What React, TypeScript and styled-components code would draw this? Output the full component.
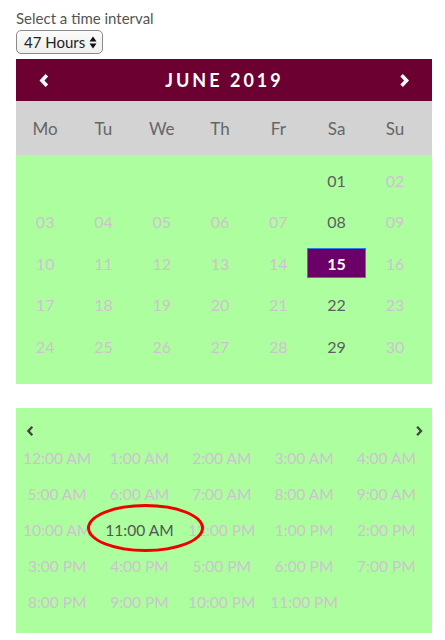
import React from "react";
import styled, { createGlobalStyle } from "styled-components";

const Global = createGlobalStyle`
  html, body { margin: 0; padding: 0; background: #fff; }
  body { font-family: "Source Sans Pro", Lato, "Noto Sans", sans-serif; }
`;

const Page = styled.div`
  padding: 8px 13px 0 16px;
  width: 416px;
`;

const Label = styled.div`
  font-size: 15px;
  color: #555;
  line-height: 20px;
`;

const SelectBox = styled.label`
  display: inline-flex;
  align-items: center;
  gap: 3px;
  margin-top: 2px;
  height: 24px;
  box-sizing: border-box;
  padding: 0 5px 0 7px;
  border: 1px solid #8a8a8a;
  border-radius: 5px;
  background: linear-gradient(#fbfbfb, #efefef);
`;

const NativeSelect = styled.select`
  appearance: none;
  -webkit-appearance: none;
  border: none;
  background: transparent;
  font-family: "Source Sans Pro", Lato, sans-serif;
  font-size: 15px;
  color: #222;
  padding: 0;
  margin: 0;
  outline: none;
`;

const Calendar = styled.div`
  margin-top: 5px;
`;

const Header = styled.div`
  height: 42px;
  background: #6c0031;
  color: #fff;
  display: flex;
  align-items: center;
  justify-content: space-between;
  padding: 0 22px 0 23px;
`;

const Title = styled.div`
  font-size: 18px;
  font-weight: 700;
  letter-spacing: 3px;
`;

const Arrow = styled.span<{ $dark?: boolean }>`
  display: flex;
  align-items: center;
  color: ${(p) => (p.$dark ? "#444" : "#fff")};
`;

const WeekRow = styled.div`
  height: 54px;
  background: #d3d3d3;
  display: grid;
  grid-template-columns: repeat(7, 58.3px);
  align-items: center;
`;

const WeekDay = styled.div`
  text-align: center;
  font-size: 17px;
  color: #666;
`;

const DaysGrid = styled.div`
  background: #adfe9f;
  display: grid;
  grid-template-columns: repeat(7, 58.3px);
  grid-auto-rows: 30px;
  row-gap: 11.5px;
  padding: 10px 0 23px;
`;

const Day = styled.div<{ $state: "empty" | "faded" | "active" | "selected" }>`
  display: flex;
  align-items: center;
  justify-content: center;
  font-size: 16px;
  box-sizing: border-box;
  color: ${(p) =>
    p.$state === "active" ? "#5e5e5e" : p.$state === "selected" ? "#fff" : "#cdc3cf"};
  background: ${(p) => (p.$state === "selected" ? "#6b0068" : "transparent")};
  border: ${(p) => (p.$state === "selected" ? "1px solid #2d7fe8" : "none")};
  font-weight: ${(p) => (p.$state === "selected" ? 700 : 400)};
`;

const TimePanel = styled.div`
  margin-top: 24px;
  background: #adfe9f;
  padding: 14px 0 13px;
  position: relative;
`;

const TimeNav = styled.div`
  display: flex;
  justify-content: space-between;
  padding: 0 9px 0 10px;
  height: 18px;
  align-items: center;
`;

const TimeGrid = styled.div`
  display: grid;
  grid-template-columns: repeat(5, 82.3px);
  grid-auto-rows: 36px;
`;

const Time = styled.div<{ $active?: boolean }>`
  display: flex;
  align-items: center;
  justify-content: center;
  font-size: 15.5px;
  white-space: nowrap;
  color: ${(p) => (p.$active ? "#555" : "#cdc3cf")};
`;

const Circle = styled.div`
  position: absolute;
  left: 71px;
  top: 96px;
  width: 117px;
  height: 48px;
  border: 3.5px solid #ee0000;
  border-radius: 50%;
  box-sizing: border-box;
  pointer-events: none;
`;

const Chevron = ({ dir, size = 14, stroke = 3.2 }: { dir: "l" | "r"; size?: number; stroke?: number }) => (
  <svg width={size * 0.7} height={size} viewBox="0 0 10 14">
    <path
      d={dir === "l" ? "M7.5 2 L2.8 7 L7.5 12" : "M2.5 2 L7.2 7 L2.5 12"}
      fill="none"
      stroke="currentColor"
      strokeWidth={stroke}
      strokeLinejoin="miter"
    />
  </svg>
);

const weekdays = ["Mo", "Tu", "We", "Th", "Fr", "Sa", "Su"];

const days: { n: string; s: "empty" | "faded" | "active" | "selected" }[] = [];
for (let i = 0; i < 5; i++) days.push({ n: "", s: "empty" });
for (let d = 1; d <= 30; d++) {
  const col = (d + 4) % 7; // 0=Mo
  let s: "faded" | "active" | "selected" = "faded";
  if (col === 5) s = "active";
  if (d === 15) s = "selected";
  days.push({ n: String(d).padStart(2, "0"), s });
}

const times: string[] = [];
for (let h = 0; h < 24; h++) {
  const hr = h % 12 === 0 ? 12 : h % 12;
  times.push(`${hr}:00 ${h < 12 ? "AM" : "PM"}`);
}

export default function App() {
  return (
    <>
      <Global />
      <Page>
        <Label>Select a time interval</Label>
        <SelectBox>
          <NativeSelect defaultValue="47">
            <option value="47">47 Hours</option>
          </NativeSelect>
          <svg width="8" height="13" viewBox="0 0 8 13">
            <path d="M4 0.5 L7.5 5.5 L0.5 5.5 Z M4 12.5 L7.5 7.5 L0.5 7.5 Z" fill="#111" />
          </svg>
        </SelectBox>
        <Calendar>
          <Header>
            <Arrow>
              <Chevron dir="l" size={15} stroke={3.4} />
            </Arrow>
            <Title>JUNE 2019</Title>
            <Arrow>
              <Chevron dir="r" size={15} stroke={3.4} />
            </Arrow>
          </Header>
          <WeekRow>
            {weekdays.map((w) => (
              <WeekDay key={w}>{w}</WeekDay>
            ))}
          </WeekRow>
          <DaysGrid>
            {days.map((d, i) => (
              <Day key={i} $state={d.s}>
                {d.n}
              </Day>
            ))}
          </DaysGrid>
        </Calendar>
        <TimePanel>
          <TimeNav>
            <Arrow $dark>
              <Chevron dir="l" size={12} stroke={2.8} />
            </Arrow>
            <Arrow $dark>
              <Chevron dir="r" size={12} stroke={2.8} />
            </Arrow>
          </TimeNav>
          <TimeGrid>
            {times.map((t) => (
              <Time key={t} $active={t === "11:00 AM"}>
                {t}
              </Time>
            ))}
          </TimeGrid>
          <Circle />
        </TimePanel>
      </Page>
    </>
  );
}
